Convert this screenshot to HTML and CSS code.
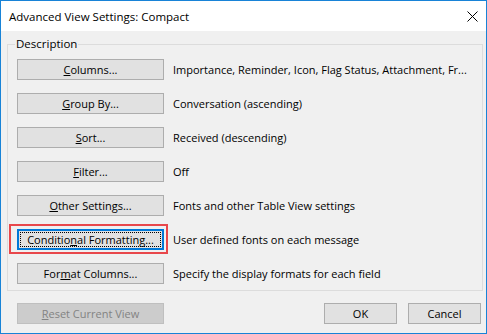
FILE: index.html
```html
<!doctype html>
<html lang="en">

<head>
    <meta charset="utf-8">
    <title>Advanced View Settings: Compact</title>
    <link rel="stylesheet" href="styles.css">
</head>

<body>
    <div class="window">
        <div class="titlebar">
            <span class="title">Advanced View Settings: Compact</span>
            <span class="close">
                <svg width="11" height="11" viewBox="0 0 11 11"><path d="M0.5 0.5 L10.5 10.5 M10.5 0.5 L0.5 10.5" stroke="#000" stroke-width="1" fill="none"/></svg>
            </span>
        </div>
        <div class="content">
            <fieldset class="group">
                <legend>Description</legend>
                <div class="row">
                    <button type="button" class="btn"><u>C</u>olumns...</button>
                    <span class="desc">Importance, Reminder, Icon, Flag Status, Attachment, Fr...</span>
                </div>
                <div class="row">
                    <button type="button" class="btn"><u>G</u>roup By...</button>
                    <span class="desc">Conversation (ascending)</span>
                </div>
                <div class="row">
                    <button type="button" class="btn"><u>S</u>ort...</button>
                    <span class="desc">Received (descending)</span>
                </div>
                <div class="row">
                    <button type="button" class="btn"><u>F</u>ilter...</button>
                    <span class="desc">Off</span>
                </div>
                <div class="row">
                    <button type="button" class="btn"><u>O</u>ther Settings...</button>
                    <span class="desc">Fonts and other Table View settings</span>
                </div>
                <div class="row">
                    <span class="highlight">
                        <button type="button" class="btn focused">Conditio<u>n</u>al Formatting...</button>
                    </span>
                    <span class="desc">User defined fonts on each message</span>
                </div>
                <div class="row">
                    <button type="button" class="btn">For<u>m</u>at Columns...</button>
                    <span class="desc">Specify the display formats for each field</span>
                </div>
            </fieldset>
            <div class="footer">
                <button type="button" class="btn" disabled><u>R</u>eset Current View</button>
                <div class="actions">
                    <button type="button" class="btn small">OK</button>
                    <button type="button" class="btn small">Cancel</button>
                </div>
            </div>
        </div>
    </div>
</body>

</html>
```

FILE: styles.css
```css
html, body {
   margin: 0;
   padding: 0;
}
body {
   font-family: "Open Sans", "Noto Sans", sans-serif;
   font-size: 11px;
   color: #000;
}
.window {
   width: 487px;
   height: 334px;
   box-sizing: border-box;
   border: 1px solid #1883d7;
   background-color: #f0f0f0;
   display: flex;
   flex-direction: column;
}
.titlebar {
   height: 30px;
   background-color: #fff;
   display: flex;
   align-items: center;
   justify-content: space-between;
   padding: 0 8px 0 8px;
}
.title {
   font-size: 11.5px;
}
.close {
   display: flex;
}
.content {
   flex: 1;
   display: flex;
   flex-direction: column;
}
.group {
   margin: 5px 3px 0 6px;
   padding: 7px 9px 6px 9px;
   border: 1px solid #dcdcdc;
   display: flex;
   flex-direction: column;
   gap: 13px;
}
.group legend {
   padding: 0 1px;
   margin-left: -2px;
   line-height: 16px;
   font-size: 11.5px;
}
.row {
   display: flex;
   align-items: center;
   gap: 9px;
}
.btn {
   font-family: inherit;
   font-size: 11px;
   color: #000;
   width: 147px;
   height: 21px;
   padding: 0;
   margin: 0;
   background-color: #e1e1e1;
   border: 1px solid #adadad;
   border-radius: 0;
   line-height: 17px;
   position: relative;
}
.btn u {
   text-underline-offset: 1px;
}
.btn.focused {
   border: 2px solid #0078d7;
}
.btn.focused::after {
   content: "";
   position: absolute;
   top: 1px;
   left: 1px;
   right: 1px;
   bottom: 1px;
   border: 1px dotted #000;
}
.btn:disabled {
   background-color: #cccccc;
   border-color: #bfbfbf;
   color: #838383;
}
.btn.small {
   width: 73px;
}
.highlight {
   position: relative;
   display: flex;
}
.highlight::before {
   content: "";
   position: absolute;
   top: -5px;
   left: -8px;
   right: -4px;
   bottom: -4px;
   border: 2px solid #e8474b;
}
.desc {
   white-space: nowrap;
}
.footer {
   display: flex;
   justify-content: space-between;
   margin-top: 12px;
   padding: 0 5px 0 16px;
}
.actions {
   display: flex;
   gap: 11px;
}
```
